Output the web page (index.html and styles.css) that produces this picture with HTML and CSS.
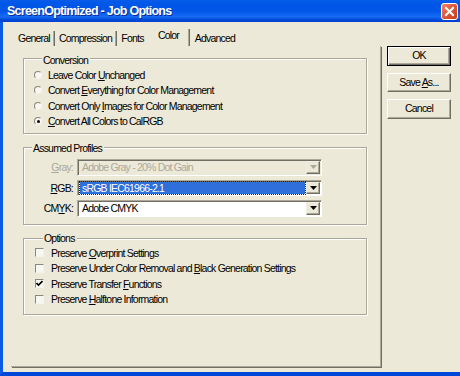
FILE: index.html
```html
<!DOCTYPE html>
<html>
<head>
<meta charset="utf-8">
<title>ScreenOptimized - Job Options</title>
<link rel="stylesheet" href="styles.css">
</head>
<body>
<div class="window">
  <div class="titlebar">
    <span class="title">ScreenOptimized - Job Options</span>
    <span class="close">
      <svg width="17" height="17" viewBox="0 0 17 17">
        <defs>
          <linearGradient id="cg" x1="0" y1="0" x2="1" y2="1">
            <stop offset="0" stop-color="#f0876a"/>
            <stop offset="0.45" stop-color="#e05b3a"/>
            <stop offset="1" stop-color="#c23c1c"/>
          </linearGradient>
        </defs>
        <rect x="0.5" y="0.5" width="16" height="16" rx="2.5" fill="url(#cg)" stroke="#fff"/>
        <path d="M5 5 L12 12 M12 5 L5 12" stroke="#fff" stroke-width="2" stroke-linecap="square"/>
      </svg>
    </span>
  </div>
  <div class="frame">
    <div class="tabs-col">
      <div class="tabs">
        <span class="tab t-general">General</span>
        <span class="tab t-compression">Compression</span>
        <span class="tab t-fonts">Fonts</span>
        <span class="tab t-color active">Color</span>
        <span class="tab t-advanced">Advanced</span>
      </div>
      <div class="panel">
        <div class="group conv">
          <span class="legend">Conversion</span>
          <div class="row"><span class="radio"></span><span class="label">Leave Color <u>U</u>nchanged</span></div>
          <div class="row"><span class="radio"></span><span class="label">Convert <u>E</u>verything for Color Management</span></div>
          <div class="row"><span class="radio"></span><span class="label">Convert Only <u>I</u>mages for Color Management</span></div>
          <div class="row"><span class="radio checked"></span><span class="label"><u>C</u>onvert All Colors to CalRGB</span></div>
        </div>
        <div class="group profiles">
          <span class="legend">Assumed Profiles</span>
          <div class="prow">
            <span class="plabel disabled"><u>G</u>ray:</span>
            <div class="combo disabled">
              <span class="ctext">Adobe Gray - 20% Dot Gain</span>
              <span class="cbtn"><svg width="7" height="4" viewBox="0 0 7 4"><polygon points="0,0 7,0 3.5,4" fill="#aca899"/></svg></span>
            </div>
          </div>
          <div class="prow">
            <span class="plabel"><u>R</u>GB:</span>
            <div class="combo">
              <span class="ctext sel">sRGB IEC61966-2.1</span>
              <span class="cbtn"><svg width="7" height="4" viewBox="0 0 7 4"><polygon points="0,0 7,0 3.5,4" fill="#000"/></svg></span>
            </div>
          </div>
          <div class="prow">
            <span class="plabel">CM<u>Y</u>K:</span>
            <div class="combo">
              <span class="ctext">Adobe CMYK</span>
              <span class="cbtn"><svg width="7" height="4" viewBox="0 0 7 4"><polygon points="0,0 7,0 3.5,4" fill="#000"/></svg></span>
            </div>
          </div>
        </div>
        <div class="group options">
          <span class="legend">Options</span>
          <div class="row"><span class="check"></span><span class="label">Preserve <u>O</u>verprint Settings</span></div>
          <div class="row"><span class="check"></span><span class="label">Preserve Under Color Removal and <u>B</u>lack Generation Settings</span></div>
          <div class="row"><span class="check checked"><svg width="7" height="7" viewBox="0 0 7 7"><path d="M0.5 3 L2.5 5 L6.5 1" stroke="#000" stroke-width="1.6" fill="none"/></svg></span><span class="label">Preserve Transfer <u>F</u>unctions</span></div>
          <div class="row"><span class="check"></span><span class="label">Preserve <u>H</u>alftone Information</span></div>
        </div>
      </div>
    </div>
    <div class="buttons">
      <div class="btn default">OK</div>
      <div class="btn">Save <u>A</u>s...</div>
      <div class="btn">Cancel</div>
    </div>
  </div>
</div>
</body>
</html>
```

FILE: styles.css
```css
* { box-sizing: border-box; }

body {
  margin: 0;
  width: 460px;
  height: 376px;
  overflow: hidden;
  font-family: "Liberation Sans", Arial, sans-serif;
  font-size: 10.5px;
  letter-spacing: -0.8px;
  color: #000;
}

u { text-decoration: underline; text-underline-offset: 1px; }

.window {
  width: 460px;
  height: 376px;
  display: flex;
  flex-direction: column;
  background: #ece9d8;
}

.titlebar {
  height: 22px;
  flex: none;
  display: flex;
  align-items: center;
  padding: 0 2px 0 7px;
  background: linear-gradient(#0a5ce9 0px, #0058e8 3px, #0055e5 11px, #0a62ef 14px, #1a6bf2 17px, #0050de 19px, #003fcc 22px);
}

.title {
  flex: 1;
  color: #fff;
  font-weight: bold;
  font-size: 12.5px;
  letter-spacing: -0.75px;
  line-height: 16px;
  text-shadow: 1px 1px 0 #0a2a9a;
}

.close {
  width: 17px;
  height: 17px;
  display: block;
  margin-top: 1px;
}
.close svg { display: block; }

.frame {
  flex: 1;
  display: flex;
  align-items: flex-start;
  border-left: 3px solid #0a5be6;
  border-bottom: 4px solid #0046d8;
  padding: 7px 0 0 8px;
}

.tabs-col {
  width: 370px;
  flex: none;
}

.tabs {
  height: 17px;
  display: flex;
  align-items: flex-end;
  padding-left: 3px;
}

.tab {
  height: 15px;
  line-height: 14px;
  text-align: center;
  border-right: 1px solid #716f64;
  box-shadow: inset -1px 0 0 #aca899;
}
.t-general { width: 41px; }
.t-compression { width: 62px; }
.t-fonts { width: 31px; border-right: none; box-shadow: none; }
.t-color { width: 42px; }
.t-advanced { width: 50px; border-right: none; box-shadow: none; }
.tab.active {
  height: 17px;
  line-height: 12px;
}

.panel {
  height: 321px;
  border-right: 1px solid #aca899;
  border-bottom: 1px solid #aca899;
  box-shadow: 1px 1px 0 #716f64;
  padding: 12px 13px 0 12px;
  display: flex;
  flex-direction: column;
  gap: 13px;
}

.group {
  border: 1px solid #aca899;
  box-shadow: inset 1px 1px 0 #fff, 1px 1px 0 #fff;
  display: flex;
  flex-direction: column;
}

.legend {
  align-self: flex-start;
  margin: -7px 0 0 8px;
  padding: 0 2px 0 1px;
  background: #ece9d8;
  line-height: 13px;
  height: 13px;
}

.conv { height: 76px; padding: 2px 0 0 10px; }
.options { height: 77px; padding: 0 0 0 11px; }
.profiles { height: 78px; padding: 1px 0 0 0; gap: 4px; }

.row {
  height: 15.5px;
  display: flex;
  align-items: center;
}

.radio {
  width: 8px;
  height: 8px;
  border-radius: 50%;
  border: 1px solid;
  border-color: #8a887c #f4f3ee #f4f3ee #8a887c;
  background: #f7f6f1;
  margin-right: 6px;
  display: flex;
  align-items: center;
  justify-content: center;
}
.radio.checked::after {
  content: "";
  width: 3px;
  height: 3px;
  border-radius: 50%;
  background: #000;
}

.check {
  width: 9px;
  height: 9px;
  border: 1px solid;
  border-color: #8a887c #f4f3ee #f4f3ee #8a887c;
  background: #f7f6f1;
  margin-right: 7px;
  display: flex;
  align-items: center;
  justify-content: center;
}
.check svg { display: block; }

.prow {
  display: flex;
  align-items: center;
  height: 16.5px;
}

.plabel {
  width: 49px;
  text-align: right;
  margin-right: 4px;
}
.plabel.disabled { color: #aca899; }

.combo {
  width: 245px;
  height: 16.5px;
  display: flex;
  border: 1px solid;
  border-color: #aca899 #fff #fff #aca899;
  box-shadow: inset 1px 1px 0 #716f64;
  background: #fff;
  padding: 1px 1px 1px 2px;
}
.combo.disabled { background: #ece9d8; color: #aca899; }

.ctext {
  flex: 1;
  line-height: 12px;
  padding-left: 2px;
  white-space: nowrap;
}
.ctext.sel {
  background: #2f6fdb;
  color: #fff;
  outline: 1px dotted #2a2000;
  outline-offset: 0;
  margin-right: 1px;
}

.cbtn {
  width: 14px;
  flex: none;
  border: 1px solid;
  border-color: #f1efe2 #716f64 #716f64 #f1efe2;
  box-shadow: inset -1px -1px 0 #aca899;
  background: #ece9d8;
  display: flex;
  align-items: center;
  justify-content: center;
}
.cbtn svg { display: block; }

.buttons {
  margin: 17px 0 0 6px;
  width: 64px;
  display: flex;
  flex-direction: column;
  gap: 7px;
}

.btn {
  height: 19.5px;
  line-height: 17px;
  text-align: center;
  border: 1px solid;
  border-color: #fff #716f64 #716f64 #fff;
  box-shadow: inset -1px -1px 0 #aca899;
  background: #ece9d8;
}
.btn.default {
  border: 1px solid #000;
  box-shadow: inset 1px 1px 0 #fff, inset -1px -1px 0 #716f64, inset -2px -2px 0 #aca899;
}
```
